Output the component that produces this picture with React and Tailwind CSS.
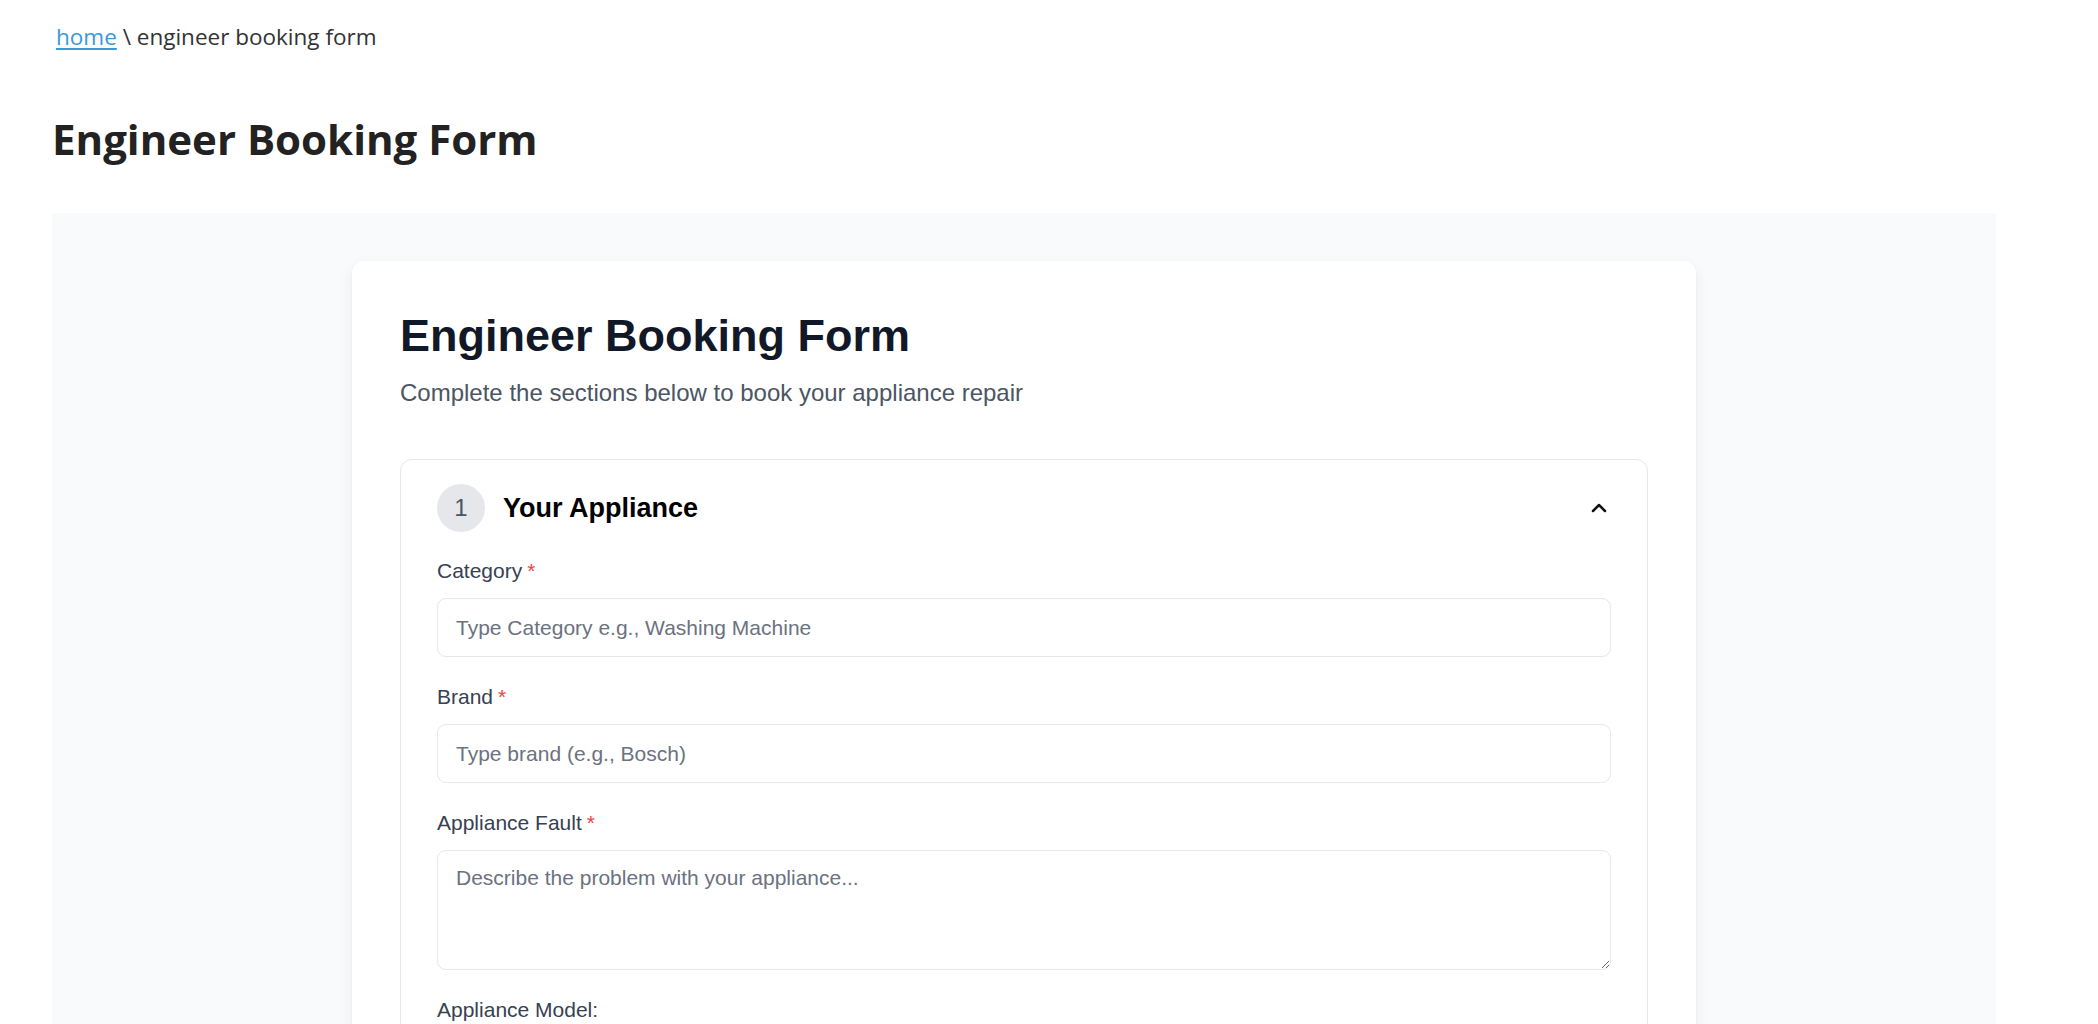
import React from "react";
import { ChevronUp } from "lucide-react";

function Label({ children, required }) {
  return (
    <label className="block text-[21px] leading-[30px] text-[#374151] mb-[12px]">
      {children}
      {required && <span className="text-[#ef4444] ml-[5px]">*</span>}
    </label>
  );
}

function TextInput({ placeholder }) {
  return (
    <input
      type="text"
      placeholder={placeholder}
      className="block w-full h-[59px] bg-white border-[1.5px] border-[#e5e7eb] rounded-[9px] px-[18px] text-[21px] text-[#111827] placeholder:text-[#6b7280] outline-none"
      style={{ fontFamily: '"Liberation Sans", Arial, sans-serif' }}
    />
  );
}

export default function App() {
  return (
    <div className="min-h-screen bg-white">
      <div className="ml-[52px] w-[1944px]">
        <div
          className="pt-[21px] pl-[4px] text-[22.5px] leading-[32px] text-[#333333]"
          style={{ fontFamily: '"Open Sans", sans-serif' }}
        >
          <a href="#" className="text-[#3a9ad9] underline underline-offset-[3px]">home</a>
          <span> \ engineer booking form</span>
        </div>

        <h1
          className="mt-[61px] text-[42px] leading-[50px] font-bold text-[#222222]"
          style={{ fontFamily: '"Open Sans", sans-serif' }}
        >
          Engineer Booking Form
        </h1>

        <div className="mt-[49px] bg-[#f9fafb] pt-[48px] pb-[48px]">
          <div
            className="w-[1344px] mx-auto bg-white rounded-[12px] shadow-[0_6px_16px_rgba(0,0,0,0.06),0_1px_3px_rgba(0,0,0,0.04)] p-[48px]"
            style={{ fontFamily: '"Liberation Sans", Arial, sans-serif' }}
          >
            <h2 className="text-[45px] leading-[54px] font-bold text-[#111827]">
              Engineer Booking Form
            </h2>
            <p className="mt-[12px] text-[24px] leading-[36px] text-[#4b5563]">
              Complete the sections below to book your appliance repair
            </p>

            <div className="mt-[48px] border-[1.5px] border-[#e5e7eb] rounded-[12px] bg-white">
              <div className="flex items-center justify-between px-[36px] py-[24px]">
                <div className="flex items-center">
                  <div className="w-[48px] h-[48px] rounded-full bg-[#e5e7eb] flex items-center justify-center text-[24px] text-[#4b5563]">
                    1
                  </div>
                  <span className="ml-[18px] text-[27px] font-bold text-black">Your Appliance</span>
                </div>
                <ChevronUp size={24} strokeWidth={2.5} className="text-[#111111]" />
              </div>

              <div className="px-[36px] pb-[36px] flex flex-col gap-[25px]">
                <div>
                  <Label required>Category</Label>
                  <TextInput placeholder="Type Category e.g., Washing Machine" />
                </div>
                <div>
                  <Label required>Brand</Label>
                  <TextInput placeholder="Type brand (e.g., Bosch)" />
                </div>
                <div>
                  <Label required>Appliance Fault</Label>
                  <textarea
                    placeholder="Describe the problem with your appliance..."
                    className="block w-full h-[120px] bg-white border-[1.5px] border-[#e5e7eb] rounded-[9px] px-[18px] pt-[12px] text-[21px] leading-[30px] text-[#111827] placeholder:text-[#6b7280] outline-none"
                    style={{ fontFamily: '"Liberation Sans", Arial, sans-serif' }}
                  />
                </div>
                <div>
                  <Label>Appliance Model:</Label>
                  <TextInput placeholder="Type model number (optional)" />
                </div>
              </div>
            </div>
          </div>
        </div>
      </div>
    </div>
  );
}
